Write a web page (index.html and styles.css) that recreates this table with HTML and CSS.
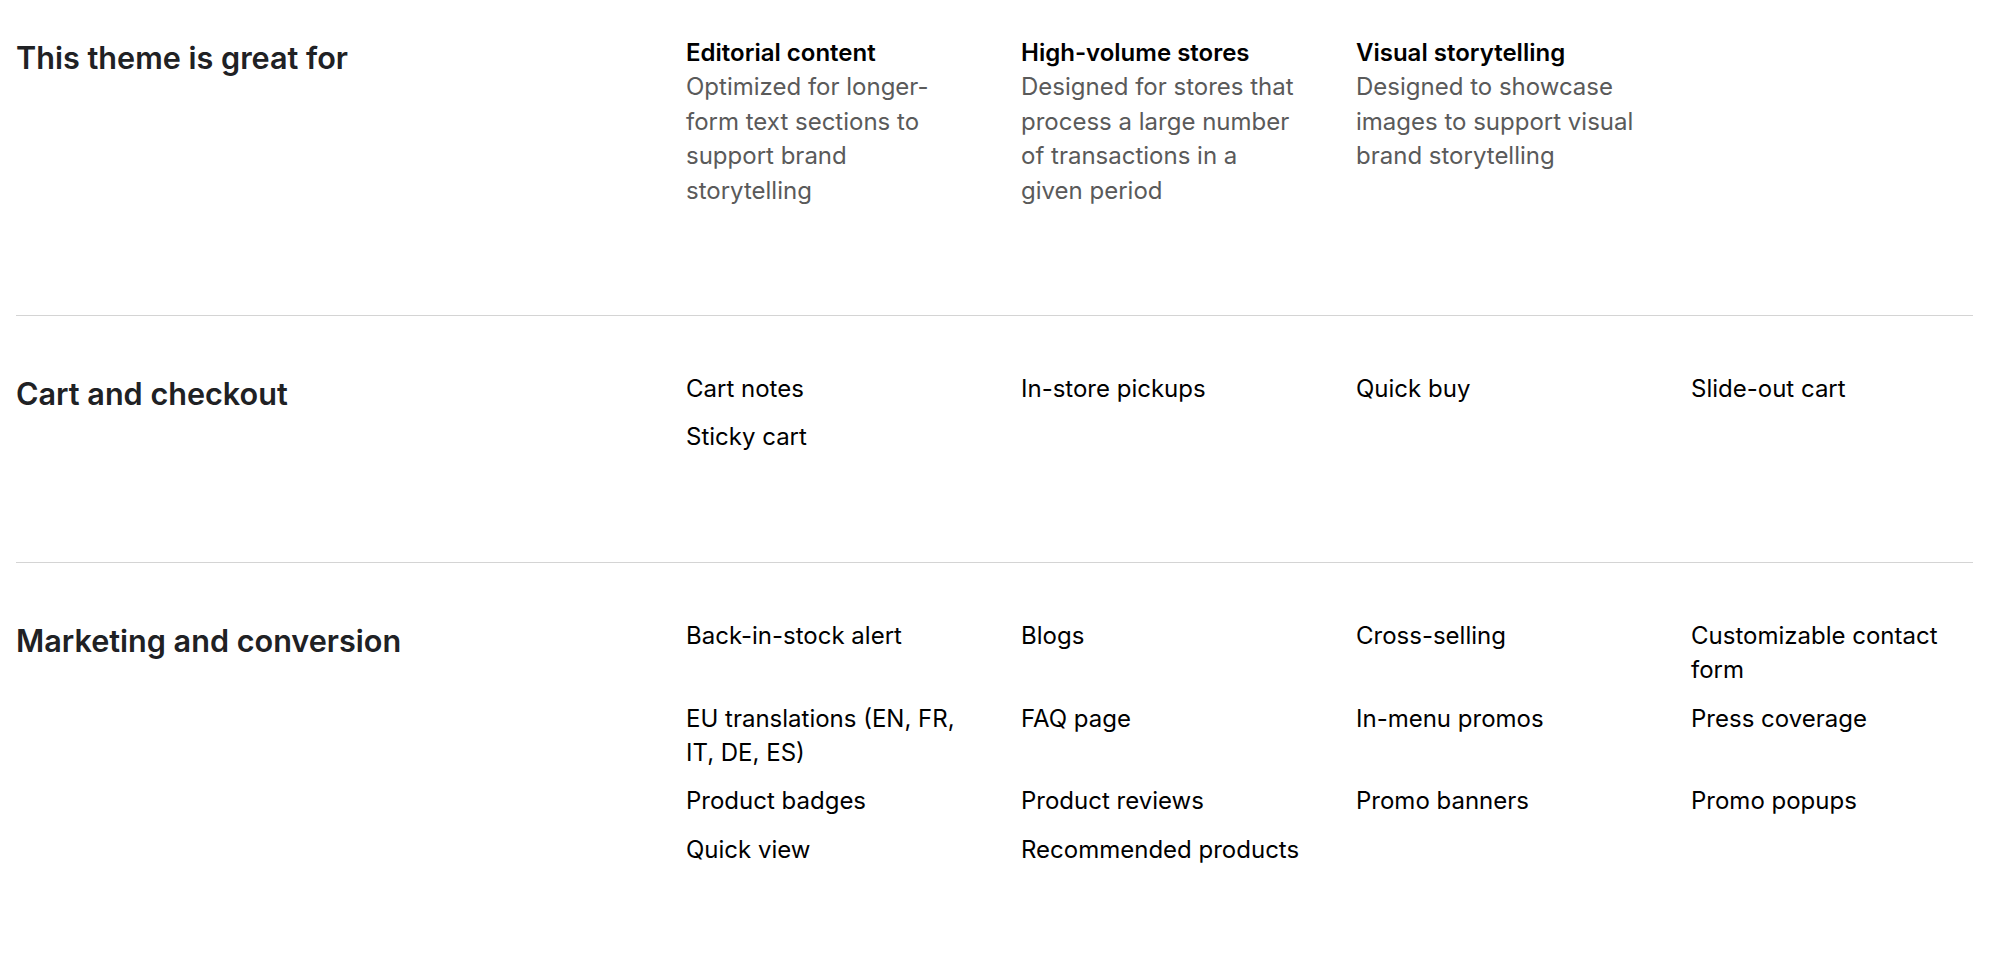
FILE: index.html
```html
<!DOCTYPE html>
<html lang="en">
<head>
<meta charset="utf-8">
<title>Theme features</title>
<link rel="stylesheet" href="styles.css">
</head>
<body>
<main class="page">
  <section class="feature-row feature-row--first">
    <h2 class="feature-heading">This theme is great for</h2>
    <div class="feature-grid">
      <div class="use-case">
        <h3 class="use-case-title">Editorial content</h3>
        <p class="use-case-text">Optimized for longer-form text sections to support brand storytelling</p>
      </div>
      <div class="use-case">
        <h3 class="use-case-title">High-volume stores</h3>
        <p class="use-case-text">Designed for stores that process a large number of transactions in a given period</p>
      </div>
      <div class="use-case">
        <h3 class="use-case-title">Visual storytelling</h3>
        <p class="use-case-text">Designed to showcase images to support visual brand storytelling</p>
      </div>
    </div>
  </section>

  <section class="feature-row">
    <h2 class="feature-heading">Cart and checkout</h2>
    <ul class="feature-grid">
      <li class="feature-item">Cart notes</li>
      <li class="feature-item">In-store pickups</li>
      <li class="feature-item">Quick buy</li>
      <li class="feature-item">Slide-out cart</li>
      <li class="feature-item">Sticky cart</li>
    </ul>
  </section>

  <section class="feature-row feature-row--last">
    <h2 class="feature-heading">Marketing and conversion</h2>
    <ul class="feature-grid">
      <li class="feature-item">Back-in-stock alert</li>
      <li class="feature-item">Blogs</li>
      <li class="feature-item">Cross-selling</li>
      <li class="feature-item">Customizable contact form</li>
      <li class="feature-item">EU translations (EN, FR, IT, DE, ES)</li>
      <li class="feature-item">FAQ page</li>
      <li class="feature-item">In-menu promos</li>
      <li class="feature-item">Press coverage</li>
      <li class="feature-item">Product badges</li>
      <li class="feature-item">Product reviews</li>
      <li class="feature-item">Promo banners</li>
      <li class="feature-item">Promo popups</li>
      <li class="feature-item">Quick view</li>
      <li class="feature-item">Recommended products</li>
    </ul>
  </section>
</main>
</body>
</html>
```

FILE: styles.css
```css
* {
  box-sizing: border-box;
}

html, body {
  margin: 0;
  padding: 0;
  background: #ffffff;
}

body {
  font-family: Inter, "Noto Sans", "Liberation Sans", sans-serif;
  color: #000000;
  -webkit-font-smoothing: antialiased;
}

.page {
  padding: 0 27px 0 16px;
}

.feature-row {
  display: grid;
  grid-template-columns: repeat(6, minmax(0, 1fr));
  column-gap: 53px;
  align-items: start;
  padding: 56px 0 107px;
  border-bottom: 1px solid #d4d4d4;
}

.feature-row--first {
  padding-top: 36px;
}

.feature-row--last {
  border-bottom: none;
}

.feature-heading {
  grid-column: span 2;
  margin: 0;
  font-size: 30.6px;
  line-height: 44px;
  font-weight: 600;
  letter-spacing: 0;
  color: #202124;
}

.feature-grid {
  grid-column: span 4;
  display: grid;
  grid-template-columns: repeat(4, minmax(0, 1fr));
  column-gap: 53px;
  row-gap: 14px;
  margin: 0;
  padding: 0;
  list-style: none;
}

.use-case-title {
  margin: 0;
  font-size: 24px;
  line-height: 34.4px;
  font-weight: 600;
  color: #000000;
}

.use-case-text {
  margin: 0;
  font-size: 24px;
  line-height: 34.4px;
  font-weight: 400;
  color: #5a5a5a;
}

.feature-item {
  font-size: 24px;
  line-height: 34.4px;
  font-weight: 400;
  color: #000000;
}
```
